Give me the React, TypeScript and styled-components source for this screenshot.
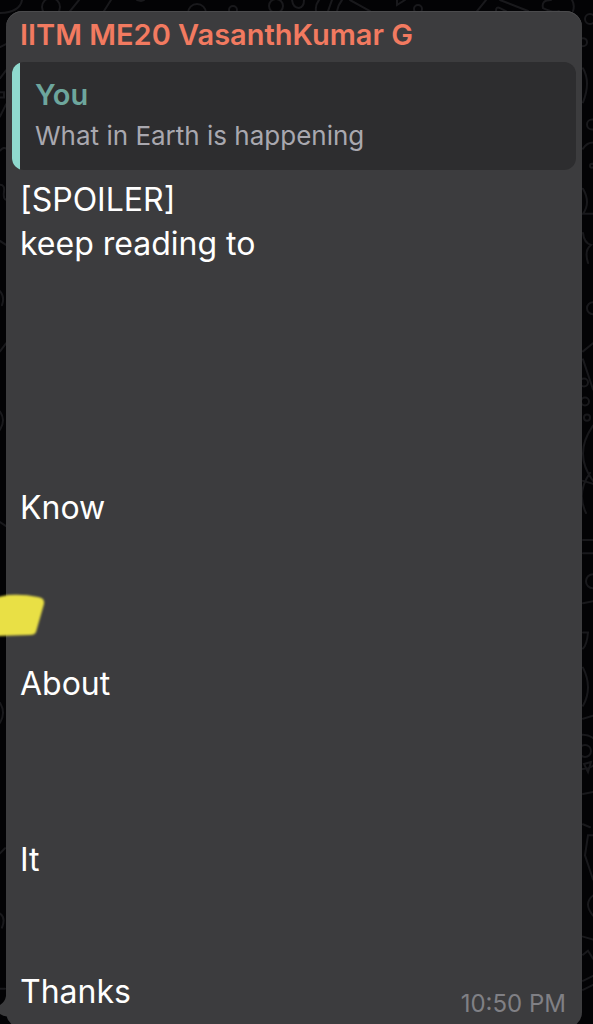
import React from "react";
import styled, { createGlobalStyle } from "styled-components";

const GlobalStyle = createGlobalStyle`
  * { box-sizing: border-box; }
  body {
    margin: 0;
    background: #030305;
    font-family: Inter, "Liberation Sans", sans-serif;
  }
`;

const Chat = styled.main`
  position: relative;
  min-height: 100vh;
  padding: 11px 11px 0 6px;
  overflow: hidden;
`;

const Wallpaper = styled.svg`
  position: absolute;
  inset: 0;
  width: 100%;
  height: 100%;
  fill: none;
  stroke: #19191c;
  stroke-width: 2;
  stroke-linecap: round;
`;

const Bubble = styled.article`
  position: relative;
  display: flex;
  flex-direction: column;
  padding: 6px 6px 10px;
  border-radius: 16px;
  background: #3c3c3e;
  box-shadow: inset 0 1px 0 #4b4b4d;
`;

const Tail = styled.svg`
  position: absolute;
  left: -6px;
  bottom: 0;
  width: 24px;
  height: 40px;
  fill: #3c3c3e;
`;

const Sender = styled.h1`
  margin: 0;
  padding: 0 8px;
  color: #f27a60;
  font-size: 29px;
  line-height: 36px;
  font-weight: 600;
`;

const Quote = styled.blockquote`
  display: flex;
  margin: 9px 0 8px;
  border-radius: 12px;
  background: #2d2d2f;
  overflow: hidden;

  &::before {
    content: "";
    flex: none;
    width: 8px;
    background: #8fd9ce;
  }
`;

const QuoteBody = styled.div`
  flex: 1;
  padding: 14px 15px 12px;
`;

const QuoteAuthor = styled.cite`
  display: block;
  color: #6da69d;
  font-size: 29px;
  font-style: normal;
  font-weight: 600;
  line-height: 38px;
`;

const QuoteText = styled.p`
  margin: 0;
  color: #a9a8af;
  font-size: 26px;
  line-height: 44px;
`;

const Message = styled.p`
  margin: 0;
  padding: 0 8px;
  color: #fff;
  font-size: 32px;
  line-height: 44px;
  white-space: pre-line;
`;

const Footer = styled.footer`
  display: flex;
  justify-content: flex-end;
  margin-top: -24px;
  padding-right: 10px;
`;

const Time = styled.time`
  color: #808085;
  font-size: 24px;
  line-height: 28px;
`;

const Marker = styled.svg`
  position: absolute;
  left: 0;
  top: 588px;
  width: 52px;
  height: 54px;
`;

const message =
  "[SPOILER]\nkeep reading to\n\n\n\n\n\nKnow\n\n\n\nAbout\n\n\n\nIt\n\n\nThanks";

export default function App() {
  return (
    <>
      <GlobalStyle />
      <Chat>
        <Wallpaper viewBox="0 0 593 1024" preserveAspectRatio="none" aria-hidden="true">
          <path d="M0 13q20-1 22-13M70 11L79 0M104 11l7-11M137 0l4 1 3-1M0 47l6-3" />
          <circle cx="51" cy="7" r="9" />
          <circle cx="197" cy="13" r="9" />
          <circle cx="233" cy="10" r="4" />
          <circle cx="276" cy="6" r="7" />
          <path d="M292 0q1 8 7 8 5-1 5-8M316 11q-1-6 3-11M328 11l4-11M337 11q1-6 5-11M350 0l20 11M397 0v5l8-5M477 11l9-11M496 11q0-5 4-3l6 3M500 0l28 11M543 8q-2-8 8-8M543 8q10 5 16 3M572 0q3 5 1 11" />
          <circle cx="418" cy="9" r="4" />
          <circle cx="590" cy="19" r="5" />
          <circle cx="583" cy="42" r="4" />
          <path d="M0 78l6-8M0 92h4v5H0M0 116l6-12M0 150q4-4 6-2M0 184q5 0 4 7t2 8M0 240l6 4" />
          <path d="M583 68q8 14 0 34M583 148q4-6 10-6M583 188q8 14 0 25h10M583 232q1 10 8 12-7 5-3 18M583 350l10-8M583 358l10 30" />
          <circle cx="592" cy="124" r="5" />
          <circle cx="592" cy="165" r="2" />
          <circle cx="593" cy="307" r="6" />
          <circle cx="584" cy="381" r="4" />
          <circle cx="585" cy="400" r="4" />
          <circle cx="587" cy="416" r="3" />
          <path d="M593 424q-20 28 0 55M583 479l10 3M590 471q-14 20-4 40M583 538h10M583 551h10M583 601l10-2M583 630h5q-1 12-5 16M583 665q10 20 0 38M583 716l10-3M583 791l10-2M583 821l7 3M593 832h-5l-3 20 8 24M593 892q-10 8 0 20M583 933l10 3M583 951l5-4 5 8" />
          <circle cx="593" cy="579" r="7" />
          <circle cx="583" cy="749" r="17" />
          <circle cx="585" cy="748" r="6" />
          <path d="M584 761l7-2-3 10zM583 977l10-5M583 986l10-5" />
          <path d="M0 290q5 6 2 14M0 350l6-8M0 410q6 8 0 18M0 520l6 4M0 700q6 10 0 20M0 850l5-5M0 910q6 4 2 14M0 985h5" />
        </Wallpaper>
        <Bubble>
          <Tail viewBox="0 0 24 40" aria-hidden="true">
            <path d="M6 0V8Q5 14 0 17V26Q5 29 7 28L12 36H20V0Z" />
          </Tail>
          <Sender>IITM ME20 VasanthKumar G</Sender>
          <Quote>
            <QuoteBody>
              <QuoteAuthor>You</QuoteAuthor>
              <QuoteText>What in Earth is happening</QuoteText>
            </QuoteBody>
          </Quote>
          <Message>{message}</Message>
          <Footer>
            <Time dateTime="22:50">10:50 PM</Time>
          </Footer>
        </Bubble>
        <Marker viewBox="0 0 52 54" aria-hidden="true">
          <defs>
            <filter id="soft" x="-20%" y="-20%" width="140%" height="140%">
              <feGaussianBlur stdDeviation="1" />
            </filter>
          </defs>
          <path d="M-6 10L8 7Q24 6 38 9Q45 10 44 16L36 44Q35 47 30 47L-6 48Z" fill="#e9e044" filter="url(#soft)" />
        </Marker>
      </Chat>
    </>
  );
}
